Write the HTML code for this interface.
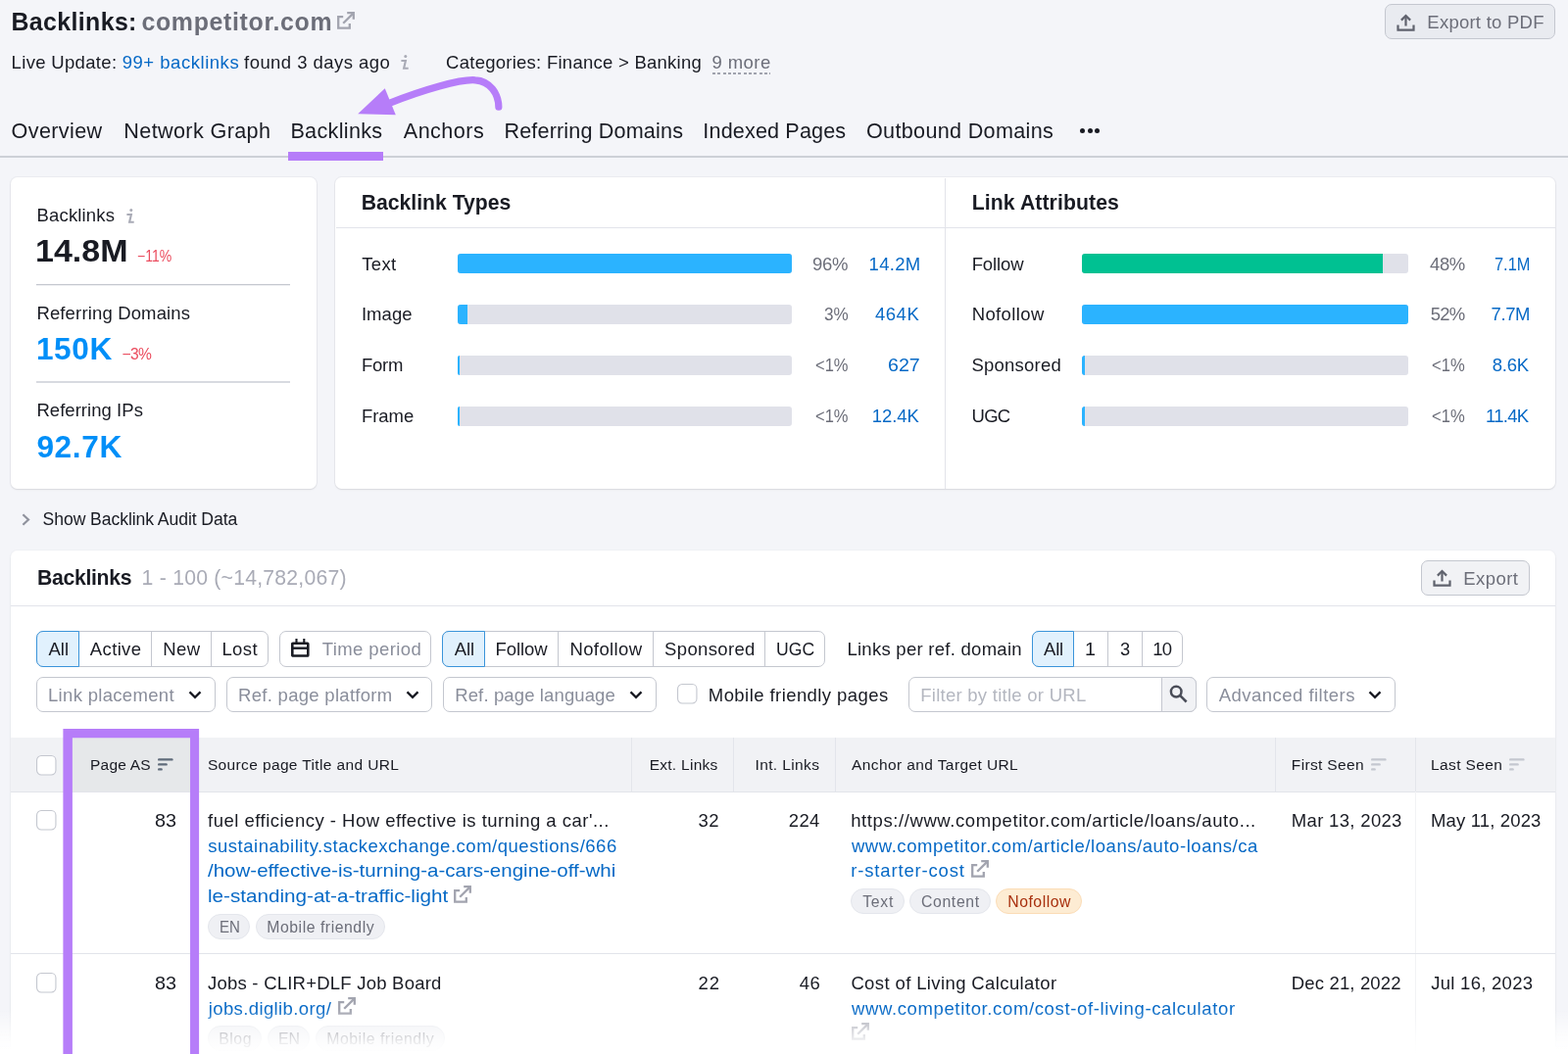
<!DOCTYPE html>
<html lang="en"><head><meta charset="utf-8"><title>Backlinks: competitor.com</title>
<style>
html,body{margin:0;padding:0}
body{width:1600px;height:1076px;overflow:hidden;position:relative;background:#f4f5f9;font-family:"Liberation Sans", sans-serif;}
#page{position:absolute;left:0;top:0;width:1600px;height:1076px;overflow:hidden;will-change:transform}
#page div,#page svg{position:absolute;box-sizing:border-box}
#page span{position:absolute;white-space:pre;display:block}
</style></head><body><div id="page">
<svg style="left:344.3px;top:12.1px;" width="18" height="18" viewBox="0 0 18 18"><g fill="none" stroke="#a2a4af" stroke-width="2.3" stroke-linecap="butt" stroke-linejoin="miter"><path d="M6.2 5.2 H1.2 V16.7 H12.8 V12"/><path d="M10.2 1.2 H16.8 V7.8"/><path d="M16.4 1.6 L6.2 11.8"/></g></svg>
<div style="left:1413.4px;top:4.2px;width:173.2px;height:36px;background:#e9ebf0;border:1px solid #c4c7cf;border-radius:7px;"></div>
<svg style="left:1425.2px;top:13.6px;" width="19" height="18" viewBox="0 0 18.4 18"><g fill="none" stroke="#5f626d" stroke-width="2.2" stroke-linejoin="miter"><path d="M1.2 11.5 V16.6 H17.2 V11.5"/><path d="M9.2 12.5 V2.5"/><path d="M4.6 6.6 L9.2 2 L13.8 6.6"/></g></svg>
<svg style="left:408px;top:55.1px;" width="10" height="17" viewBox="0 0 10 17"><path d="M1.4 7 H5.9 L4.1 14.8 H8.7" fill="none" stroke="#a9abb6" stroke-width="2.1"/><circle cx="5.8" cy="2.4" r="1.5" fill="#a9abb6"/></svg>
<div style="left:726.8px;top:74px;width:59px;height:1.8px;background:repeating-linear-gradient(to right,#a0a3ae 0,#a0a3ae 3px,transparent 3px,transparent 5.3px);"></div>
<div style="left:1102.2px;top:130.6px;width:5.2px;height:5.2px;background:#191b23;border-radius:50%;"></div>
<div style="left:1109.6000000000001px;top:130.6px;width:5.2px;height:5.2px;background:#191b23;border-radius:50%;"></div>
<div style="left:1117.0px;top:130.6px;width:5.2px;height:5.2px;background:#191b23;border-radius:50%;"></div>
<div style="left:0px;top:159px;width:1600px;height:2px;background:#cdd0d7;"></div>
<div style="left:294px;top:154.6px;width:97px;height:9.6px;background:#b67df9;"></div>
<svg style="left:350px;top:70px;" width="180" height="60" viewBox="0 0 180 60"><path d="M158.85 39.2 C158.8 26 150 12.5 135 11.8 C120 10.6 82 21.5 46 35.8" fill="none" stroke="#b67df9" stroke-width="7.2" stroke-linecap="round"/><path d="M15.2 46.35 L42.75 20.25 L53.8 47.25 Z" fill="#b67df9"/></svg>
<div style="left:10.8px;top:181.4px;width:311.8px;height:317.6px;background:#fff;border-radius:6.5px;box-shadow:0 0 0 1px rgba(25,27,35,0.045),0 1px 2px rgba(25,27,35,0.09);"></div>
<svg style="left:127.5px;top:212px;" width="10" height="17" viewBox="0 0 10 17"><path d="M1.4 7 H5.9 L4.1 14.8 H8.7" fill="none" stroke="#a9abb6" stroke-width="2.1"/><circle cx="5.8" cy="2.4" r="1.5" fill="#a9abb6"/></svg>
<svg style="left:37px;top:288px;" width="259" height="5" viewBox="0 0 259 5"><rect x="0" y="1.95" width="259" height="1.3" fill="#c4c7cf"/></svg>
<svg style="left:37px;top:388px;" width="259" height="5" viewBox="0 0 259 5"><rect x="0" y="1.35" width="259" height="1.3" fill="#c4c7cf"/></svg>
<div style="left:342.1px;top:181.4px;width:1245.1px;height:317.6px;background:#fff;border-radius:6.5px;box-shadow:0 0 0 1px rgba(25,27,35,0.045),0 1px 2px rgba(25,27,35,0.09);"></div>
<div style="left:342.5px;top:232.2px;width:1244.5px;height:1.2px;background:#e2e4ea;"></div>
<div style="left:963.8px;top:181.5px;width:1.2px;height:317.5px;background:#e2e4ea;"></div>
<div style="left:467px;top:259.4px;width:341px;height:20px;background:#e0e1e9;border-radius:3px;overflow:hidden;"></div>
<div style="left:467px;top:259.4px;width:341px;height:20px;background:#2bb3ff;border-radius:3px;"></div>
<div style="left:467px;top:311.29999999999995px;width:341px;height:20px;background:#e0e1e9;border-radius:3px;overflow:hidden;"></div>
<div style="left:467px;top:311.29999999999995px;width:10.2px;height:20px;background:#2bb3ff;border-radius:3px 0 0 3px;"></div>
<div style="left:467px;top:363.2px;width:341px;height:20px;background:#e0e1e9;border-radius:3px;overflow:hidden;"></div>
<div style="left:467px;top:363.2px;width:2.4px;height:20px;background:#2bb3ff;border-radius:3px 0 0 3px;"></div>
<div style="left:467px;top:415.09999999999997px;width:341px;height:20px;background:#e0e1e9;border-radius:3px;overflow:hidden;"></div>
<div style="left:467px;top:415.09999999999997px;width:2.4px;height:20px;background:#2bb3ff;border-radius:3px 0 0 3px;"></div>
<div style="left:1104.2px;top:259.4px;width:333px;height:20px;background:#e0e1e9;border-radius:3px;"></div>
<div style="left:1104.2px;top:259.4px;width:306.8px;height:20px;background:#00c192;border-radius:3px 0 0 3px;"></div>
<div style="left:1104.2px;top:311.29999999999995px;width:333px;height:20px;background:#e0e1e9;border-radius:3px;"></div>
<div style="left:1104.2px;top:311.29999999999995px;width:333px;height:20px;background:#2bb3ff;border-radius:3px;"></div>
<div style="left:1104.2px;top:363.2px;width:333px;height:20px;background:#e0e1e9;border-radius:3px;"></div>
<div style="left:1104.2px;top:363.2px;width:2.4px;height:20px;background:#2bb3ff;border-radius:3px 0 0 3px;"></div>
<div style="left:1104.2px;top:415.09999999999997px;width:333px;height:20px;background:#e0e1e9;border-radius:3px;"></div>
<div style="left:1104.2px;top:415.09999999999997px;width:2.4px;height:20px;background:#2bb3ff;border-radius:3px 0 0 3px;"></div>
<svg style="left:21.6px;top:524.2px;" width="9.5" height="13" viewBox="0 0 9.5 13"><path d="M1.4 1.3 L7 6.5 L1.4 11.7" fill="none" stroke="#8f929d" stroke-width="2.2"/></svg>
<div style="left:10.8px;top:561.8px;width:1576.4px;height:560px;background:#fff;border-radius:6.5px;box-shadow:0 0 0 1px rgba(25,27,35,0.02),0 1px 2px rgba(25,27,35,0.09);"></div>
<div style="left:1450px;top:572px;width:110.6px;height:35.6px;background:#f1f2f5;border:1px solid #c4c7cf;border-radius:7px;"></div>
<svg style="left:1462.4px;top:581px;" width="19" height="18" viewBox="0 0 18.4 18"><g fill="none" stroke="#5f626d" stroke-width="2.2" stroke-linejoin="miter"><path d="M1.2 11.5 V16.6 H17.2 V11.5"/><path d="M9.2 12.5 V2.5"/><path d="M4.6 6.6 L9.2 2 L13.8 6.6"/></g></svg>
<div style="left:11px;top:618px;width:1576px;height:1px;background:#e2e4ea;"></div>
<div style="left:37px;top:644px;width:237.2px;height:36.6px;background:#fff;border:1px solid #c4c7cf;border-radius:7px;"></div>
<div style="left:80.1px;top:644px;width:1px;height:36.6px;background:#c4c7cf;"></div>
<div style="left:153.9px;top:644px;width:1px;height:36.6px;background:#c4c7cf;"></div>
<div style="left:214.9px;top:644px;width:1px;height:36.6px;background:#c4c7cf;"></div>
<div style="left:37px;top:644px;width:44.099999999999994px;height:36.6px;background:#e1f1fd;border:1.3px solid #3a94da;border-radius:7px 0 0 7px;"></div>
<div style="left:285.2px;top:644px;width:155.2px;height:36.6px;background:#fff;border:1px solid #c4c7cf;border-radius:7px;"></div>
<svg style="left:297.4px;top:652.1px;" width="18.6" height="18.8" viewBox="0 0 18.6 18.8"><g fill="none" stroke="#191b23"><rect x="1.3" y="4.7" width="16" height="12.8" rx="0.6" stroke-width="2.6"/><path d="M1.3 9.7 H17.3" stroke-width="2.4"/><path d="M5.5 0 V5.6 M13.3 0 V5.6" stroke-width="2.1"/></g></svg>
<div style="left:451.2px;top:644px;width:391.2px;height:36.6px;background:#fff;border:1px solid #c4c7cf;border-radius:7px;"></div>
<div style="left:494.1px;top:644px;width:1px;height:36.6px;background:#c4c7cf;"></div>
<div style="left:569.3px;top:644px;width:1px;height:36.6px;background:#c4c7cf;"></div>
<div style="left:665.9px;top:644px;width:1px;height:36.6px;background:#c4c7cf;"></div>
<div style="left:779.9px;top:644px;width:1px;height:36.6px;background:#c4c7cf;"></div>
<div style="left:451.2px;top:644px;width:43.900000000000034px;height:36.6px;background:#e1f1fd;border:1.3px solid #3a94da;border-radius:7px 0 0 7px;"></div>
<div style="left:1052.6px;top:644px;width:154.4000000000001px;height:36.6px;background:#fff;border:1px solid #c4c7cf;border-radius:7px;"></div>
<div style="left:1095.3px;top:644px;width:1px;height:36.6px;background:#c4c7cf;"></div>
<div style="left:1129.9px;top:644px;width:1px;height:36.6px;background:#c4c7cf;"></div>
<div style="left:1164.7px;top:644px;width:1px;height:36.6px;background:#c4c7cf;"></div>
<div style="left:1052.6px;top:644px;width:43.700000000000045px;height:36.6px;background:#e1f1fd;border:1.3px solid #3a94da;border-radius:7px 0 0 7px;"></div>
<div style="left:37px;top:691px;width:183.2px;height:36px;background:#fff;border:1px solid #c4c7cf;border-radius:7px;"></div>
<svg style="left:192.2px;top:705.2px;" width="14" height="9" viewBox="0 0 13.4 9"><path d="M1.2 1.4 L6.7 6.9 L12.2 1.4" fill="none" stroke="#191b23" stroke-width="2.3"/></svg>
<div style="left:231.2px;top:691px;width:210.2px;height:36px;background:#fff;border:1px solid #c4c7cf;border-radius:7px;"></div>
<svg style="left:414.4px;top:705.2px;" width="14" height="9" viewBox="0 0 13.4 9"><path d="M1.2 1.4 L6.7 6.9 L12.2 1.4" fill="none" stroke="#191b23" stroke-width="2.3"/></svg>
<div style="left:452.2px;top:691px;width:217.59999999999997px;height:36px;background:#fff;border:1px solid #c4c7cf;border-radius:7px;"></div>
<svg style="left:641.6px;top:705.2px;" width="14" height="9" viewBox="0 0 13.4 9"><path d="M1.2 1.4 L6.7 6.9 L12.2 1.4" fill="none" stroke="#191b23" stroke-width="2.3"/></svg>
<svg style="left:691px;top:697.5px;" width="21" height="21" viewBox="0 0 21 21"><rect x="0.55" y="0.55" width="19.4" height="19.4" rx="4.6" fill="#fff" stroke="#c4c7cf" stroke-width="1.1"/></svg>
<div style="left:927.4px;top:691px;width:293.6px;height:36px;background:#fff;border:1px solid #c4c7cf;border-radius:7px;"></div>
<div style="left:1185px;top:691px;width:36px;height:36px;background:#f1f2f5;border:1px solid #c4c7cf;border-radius:0 7px 7px 0;"></div>
<svg style="left:1193px;top:699px;" width="19" height="19" viewBox="0 0 19 19"><g fill="none" stroke="#4a4d58"><circle cx="7.2" cy="7.1" r="5.3" stroke-width="2.5"/><path d="M11 10.9 L17.6 17.5" stroke-width="2.5"/></g></svg>
<div style="left:1231.2px;top:691px;width:193.2px;height:36px;background:#fff;border:1px solid #c4c7cf;border-radius:7px;"></div>
<svg style="left:1395.6px;top:705.2px;" width="14" height="9" viewBox="0 0 13.4 9"><path d="M1.2 1.4 L6.7 6.9 L12.2 1.4" fill="none" stroke="#191b23" stroke-width="2.3"/></svg>
<div style="left:11px;top:753px;width:1576px;height:55.4px;background:#f1f2f5;"></div>
<div style="left:74px;top:753px;width:120.4px;height:55.4px;background:#e6e8ea;"></div>
<div style="left:11px;top:807.6px;width:1576px;height:1.2px;background:#e2e4ea;"></div>
<div style="left:644.1px;top:753px;width:1px;height:55px;background:#e3e5eb;"></div>
<div style="left:747.7px;top:753px;width:1px;height:55px;background:#e3e5eb;"></div>
<div style="left:851.5px;top:753px;width:1px;height:55px;background:#e3e5eb;"></div>
<div style="left:1300.7px;top:753px;width:1px;height:55px;background:#e3e5eb;"></div>
<div style="left:1443.7px;top:753px;width:1px;height:55px;background:#e3e5eb;"></div>
<div style="left:1443.8px;top:808px;width:1px;height:280px;background:#f1f2f5;"></div>
<svg style="left:37.3px;top:771.2px;" width="21" height="21" viewBox="0 0 21 21"><rect x="0.55" y="0.55" width="19.4" height="19.4" rx="4.6" fill="#fff" stroke="#c4c7cf" stroke-width="1.1"/></svg>
<svg style="left:161.3px;top:773.6px;" width="16" height="13" viewBox="0 0 16 13"><g fill="#5f6b7a"><rect x="0" y="0.2" width="15.6" height="2.4" rx="1.2"/><rect x="0" y="5.2" width="9.8" height="2.4" rx="1.2"/><rect x="0" y="10.2" width="4.8" height="2.4" rx="1.2"/></g></svg>
<svg style="left:1398.8px;top:773.6px;" width="16" height="13" viewBox="0 0 16 13"><g fill="#c4c7cf"><rect x="0" y="0.2" width="15.6" height="2.4" rx="1.2"/><rect x="0" y="5.2" width="9.8" height="2.4" rx="1.2"/><rect x="0" y="10.2" width="4.8" height="2.4" rx="1.2"/></g></svg>
<svg style="left:1540.4px;top:773.6px;" width="16" height="13" viewBox="0 0 16 13"><g fill="#c4c7cf"><rect x="0" y="0.2" width="15.6" height="2.4" rx="1.2"/><rect x="0" y="5.2" width="9.8" height="2.4" rx="1.2"/><rect x="0" y="10.2" width="4.8" height="2.4" rx="1.2"/></g></svg>
<svg style="left:37.3px;top:826.9px;" width="21" height="21" viewBox="0 0 21 21"><rect x="0.55" y="0.55" width="19.4" height="19.4" rx="4.6" fill="#fff" stroke="#c4c7cf" stroke-width="1.1"/></svg>
<svg style="left:463.4px;top:904.2px;" width="18" height="18" viewBox="0 0 18 18"><g fill="none" stroke="#a2a4af" stroke-width="2.3" stroke-linecap="butt" stroke-linejoin="miter"><path d="M6.2 5.2 H1.2 V16.7 H12.8 V12"/><path d="M10.2 1.2 H16.8 V7.8"/><path d="M16.4 1.6 L6.2 11.8"/></g></svg>
<div style="left:212px;top:933.1px;width:42.599999999999994px;height:25.6px;background:#eff0f4;border-radius:13px;border:1px solid #e4e6ec;"></div>
<div style="left:260.8px;top:933.1px;width:132.59999999999997px;height:25.6px;background:#eff0f4;border-radius:13px;border:1px solid #e4e6ec;"></div>
<svg style="left:991px;top:878px;" width="18" height="18" viewBox="0 0 18 18"><g fill="none" stroke="#a2a4af" stroke-width="2.3" stroke-linecap="butt" stroke-linejoin="miter"><path d="M6.2 5.2 H1.2 V16.7 H12.8 V12"/><path d="M10.2 1.2 H16.8 V7.8"/><path d="M16.4 1.6 L6.2 11.8"/></g></svg>
<div style="left:868.2px;top:907.3px;width:54.39999999999998px;height:25.6px;background:#eff0f4;border-radius:13px;border:1px solid #e4e6ec;"></div>
<div style="left:928.2px;top:907.3px;width:82.59999999999991px;height:25.6px;background:#eff0f4;border-radius:13px;border:1px solid #e4e6ec;"></div>
<div style="left:1016.2px;top:907.3px;width:88.0px;height:25.6px;background:#fdecd3;border-radius:13px;border:1px solid #fbdcb6;"></div>
<div style="left:11px;top:972.6px;width:1576px;height:1.2px;background:#e2e4ea;"></div>
<svg style="left:37.3px;top:992.7px;" width="21" height="21" viewBox="0 0 21 21"><rect x="0.55" y="0.55" width="19.4" height="19.4" rx="4.6" fill="#fff" stroke="#c4c7cf" stroke-width="1.1"/></svg>
<svg style="left:345.2px;top:1018.2px;" width="18" height="18" viewBox="0 0 18 18"><g fill="none" stroke="#a2a4af" stroke-width="2.3" stroke-linecap="butt" stroke-linejoin="miter"><path d="M6.2 5.2 H1.2 V16.7 H12.8 V12"/><path d="M10.2 1.2 H16.8 V7.8"/><path d="M16.4 1.6 L6.2 11.8"/></g></svg>
<div style="left:212px;top:1047.4px;width:55px;height:25.6px;background:#eff0f4;border-radius:13px;border:1px solid #e4e6ec;"></div>
<div style="left:272.8px;top:1047.4px;width:43.0px;height:25.6px;background:#eff0f4;border-radius:13px;border:1px solid #e4e6ec;"></div>
<div style="left:321.6px;top:1047.4px;width:132.79999999999995px;height:25.6px;background:#eff0f4;border-radius:13px;border:1px solid #e4e6ec;"></div>
<svg style="left:869px;top:1044px;" width="18" height="18" viewBox="0 0 18 18"><g fill="none" stroke="#a2a4af" stroke-width="2.3" stroke-linecap="butt" stroke-linejoin="miter"><path d="M6.2 5.2 H1.2 V16.7 H12.8 V12"/><path d="M10.2 1.2 H16.8 V7.8"/><path d="M16.4 1.6 L6.2 11.8"/></g></svg>
<span style="left:11.52px;top:8px;font-size:24.9px;line-height:28px;color:#191b23;font-weight:700;letter-spacing:0.373px;">Backlinks:</span>
<span style="left:144.48px;top:8px;font-size:24.9px;line-height:28px;color:#6c6e79;font-weight:700;letter-spacing:0.671px;">competitor.com</span>
<span style="left:1456.32px;top:12px;font-size:18.5px;line-height:21px;color:#6c6e79;letter-spacing:0.245px;">Export to PDF</span>
<span style="left:11.62px;top:53px;font-size:18.5px;line-height:21px;color:#191b23;letter-spacing:0.327px;">Live Update:</span>
<span style="left:124.65px;top:53px;font-size:18.5px;line-height:21px;color:#0669c6;letter-spacing:0.534px;">99+ backlinks</span>
<span style="left:249.05px;top:53px;font-size:18.5px;line-height:21px;color:#191b23;letter-spacing:0.452px;">found 3 days ago</span>
<span style="left:455.08px;top:53px;font-size:18.5px;line-height:21px;color:#191b23;letter-spacing:0.258px;">Categories: Finance &gt; Banking</span>
<span style="left:726.45px;top:53px;font-size:18.5px;line-height:21px;color:#6c6e79;letter-spacing:0.438px;">9 more</span>
<span style="left:11.62px;top:121px;font-size:21.6px;line-height:25px;color:#191b23;letter-spacing:0.361px;">Overview</span>
<span style="left:126.29px;top:121px;font-size:21.6px;line-height:25px;color:#191b23;letter-spacing:0.375px;">Network Graph</span>
<span style="left:296.39px;top:121px;font-size:21.6px;line-height:25px;color:#191b23;letter-spacing:0.322px;">Backlinks</span>
<span style="left:411.82px;top:121px;font-size:21.6px;line-height:25px;color:#191b23;letter-spacing:0.441px;">Anchors</span>
<span style="left:514.39px;top:121px;font-size:21.6px;line-height:25px;color:#191b23;letter-spacing:0.161px;">Referring Domains</span>
<span style="left:717.37px;top:121px;font-size:21.6px;line-height:25px;color:#191b23;letter-spacing:0.145px;">Indexed Pages</span>
<span style="left:884.02px;top:121px;font-size:21.6px;line-height:25px;color:#191b23;letter-spacing:0.313px;">Outbound Domains</span>
<span style="left:37.58px;top:209px;font-size:18.5px;line-height:21px;color:#191b23;letter-spacing:0.156px;">Backlinks</span>
<span style="left:36.46px;top:238px;font-size:31.6px;line-height:36px;color:#191b23;font-weight:700;transform:scaleX(1.0776);transform-origin:0 0;">14.8M</span>
<span style="left:139.51px;top:253px;font-size:15.6px;line-height:17px;color:#eb4c5e;transform:scaleX(0.8984);transform-origin:0 0;">−11%</span>
<span style="left:37.38px;top:309px;font-size:18.5px;line-height:21px;color:#191b23;letter-spacing:0.153px;">Referring Domains</span>
<span style="left:36.91px;top:338px;font-size:31.6px;line-height:36px;color:#008ff8;font-weight:700;letter-spacing:0.617px;">150K</span>
<span style="left:124.43px;top:353px;font-size:15.6px;line-height:17px;color:#eb4c5e;letter-spacing:-0.565px;">−3%</span>
<span style="left:37.38px;top:408px;font-size:18.5px;line-height:21px;color:#191b23;letter-spacing:0.051px;">Referring IPs</span>
<span style="left:37.40px;top:438px;font-size:31.6px;line-height:36px;color:#008ff8;font-weight:700;letter-spacing:0.644px;">92.7K</span>
<span style="left:368.78px;top:195px;font-size:21.2px;line-height:23px;color:#191b23;font-weight:700;letter-spacing:-0.017px;">Backlink Types</span>
<span style="left:991.78px;top:195px;font-size:21.2px;line-height:23px;color:#191b23;font-weight:700;letter-spacing:0.098px;">Link Attributes</span>
<span style="left:369.18px;top:259px;font-size:18.5px;line-height:21px;color:#191b23;letter-spacing:0.338px;">Text</span>
<span style="left:829.05px;top:259px;font-size:18.5px;line-height:21px;color:#6c6e79;letter-spacing:-0.312px;">96%</span>
<span style="left:886.61px;top:259px;font-size:18.5px;line-height:21px;color:#0669c6;letter-spacing:0.271px;">14.2M</span>
<span style="left:368.89px;top:310px;font-size:18.5px;line-height:21px;color:#191b23;letter-spacing:0.077px;">Image</span>
<span style="left:840.67px;top:310px;font-size:18.5px;line-height:21px;color:#6c6e79;transform:scaleX(0.9249);transform-origin:0 0;">3%</span>
<span style="left:892.89px;top:310px;font-size:18.5px;line-height:21px;color:#0669c6;letter-spacing:0.565px;">464K</span>
<span style="left:368.88px;top:362px;font-size:18.5px;line-height:21px;color:#191b23;letter-spacing:-0.178px;">Form</span>
<span style="left:831.89px;top:362px;font-size:18.5px;line-height:21px;color:#6c6e79;transform:scaleX(0.8921);transform-origin:0 0;">&lt;1%</span>
<span style="left:905.82px;top:362px;font-size:18.5px;line-height:21px;color:#0669c6;transform:scaleX(1.0612);transform-origin:0 0;">627</span>
<span style="left:368.88px;top:414px;font-size:18.5px;line-height:21px;color:#191b23;letter-spacing:-0.028px;">Frame</span>
<span style="left:831.89px;top:414px;font-size:18.5px;line-height:21px;color:#6c6e79;transform:scaleX(0.8921);transform-origin:0 0;">&lt;1%</span>
<span style="left:889.71px;top:414px;font-size:18.5px;line-height:21px;color:#0669c6;letter-spacing:-0.065px;">12.4K</span>
<span style="left:991.68px;top:259px;font-size:18.5px;line-height:21px;color:#191b23;letter-spacing:-0.119px;">Follow</span>
<span style="left:1459.09px;top:259px;font-size:18.5px;line-height:21px;color:#6c6e79;letter-spacing:-0.433px;">48%</span>
<span style="left:1524.88px;top:259px;font-size:18.5px;line-height:21px;color:#0669c6;transform:scaleX(0.8864);transform-origin:0 0;">7.1M</span>
<span style="left:991.68px;top:310px;font-size:18.5px;line-height:21px;color:#191b23;letter-spacing:0.388px;">Nofollow</span>
<span style="left:1459.78px;top:310px;font-size:18.5px;line-height:21px;color:#6c6e79;letter-spacing:-0.775px;">52%</span>
<span style="left:1521.57px;top:310px;font-size:18.5px;line-height:21px;color:#0669c6;letter-spacing:-0.398px;">7.7M</span>
<span style="left:991.46px;top:362px;font-size:18.5px;line-height:21px;color:#191b23;letter-spacing:0.231px;">Sponsored</span>
<span style="left:1461.49px;top:362px;font-size:18.5px;line-height:21px;color:#6c6e79;transform:scaleX(0.8976);transform-origin:0 0;">&lt;1%</span>
<span style="left:1522.72px;top:362px;font-size:18.5px;line-height:21px;color:#0669c6;letter-spacing:-0.190px;">8.6K</span>
<span style="left:991.57px;top:414px;font-size:18.5px;line-height:21px;color:#191b23;letter-spacing:-0.797px;">UGC</span>
<span style="left:1461.49px;top:414px;font-size:18.5px;line-height:21px;color:#6c6e79;transform:scaleX(0.8976);transform-origin:0 0;">&lt;1%</span>
<span style="left:1516.11px;top:414px;font-size:18.5px;line-height:21px;color:#0669c6;letter-spacing:-0.722px;">11.4K</span>
<span style="left:43.59px;top:520px;font-size:17.6px;line-height:20px;color:#191b23;letter-spacing:-0.077px;">Show Backlink Audit Data</span>
<span style="left:38.11px;top:578px;font-size:21.2px;line-height:23px;color:#191b23;font-weight:700;letter-spacing:-0.323px;">Backlinks</span>
<span style="left:144.61px;top:578px;font-size:21.2px;line-height:23px;color:#a9abb6;letter-spacing:0.227px;">1 - 100 (~14,782,067)</span>
<span style="left:1493.22px;top:580px;font-size:18.5px;line-height:21px;color:#6c6e79;letter-spacing:0.450px;">Export</span>
<span style="left:49.47px;top:652px;font-size:18.5px;line-height:21px;color:#191b23;">All</span>
<span style="left:91.87px;top:652px;font-size:18.5px;line-height:21px;color:#191b23;letter-spacing:0.352px;">Active</span>
<span style="left:166.22px;top:652px;font-size:18.5px;line-height:21px;color:#191b23;letter-spacing:0.460px;">New</span>
<span style="left:226.42px;top:652px;font-size:18.5px;line-height:21px;color:#191b23;letter-spacing:0.383px;">Lost</span>
<span style="left:328.69px;top:652px;font-size:18.5px;line-height:21px;color:#8a8e9b;letter-spacing:0.410px;">Time period</span>
<span style="left:463.67px;top:652px;font-size:18.5px;line-height:21px;color:#191b23;letter-spacing:-0.099px;">All</span>
<span style="left:505.62px;top:652px;font-size:18.5px;line-height:21px;color:#191b23;letter-spacing:-0.106px;">Follow</span>
<span style="left:581.42px;top:652px;font-size:18.5px;line-height:21px;color:#191b23;letter-spacing:0.398px;">Nofollow</span>
<span style="left:678.08px;top:652px;font-size:18.5px;line-height:21px;color:#191b23;letter-spacing:0.354px;">Sponsored</span>
<span style="left:792.18px;top:652px;font-size:18.5px;line-height:21px;color:#191b23;transform:scaleX(0.9505);transform-origin:0 0;">UGC</span>
<span style="left:864.42px;top:652px;font-size:18.5px;line-height:21px;color:#191b23;letter-spacing:0.271px;">Links per ref. domain</span>
<span style="left:1065.07px;top:652px;font-size:18.5px;line-height:21px;color:#191b23;letter-spacing:-0.199px;">All</span>
<span style="left:1107.42px;top:652px;font-size:18.5px;line-height:21px;color:#191b23;transform:scaleX(1.0621);transform-origin:0 0;">1</span>
<span style="left:1143.22px;top:652px;font-size:18.5px;line-height:21px;color:#191b23;transform:scaleX(0.9888);transform-origin:0 0;">3</span>
<span style="left:1176.31px;top:652px;font-size:18.5px;line-height:21px;color:#191b23;letter-spacing:-0.766px;">10</span>
<span style="left:49.02px;top:699px;font-size:18.5px;line-height:21px;color:#8a8e9b;letter-spacing:0.314px;">Link placement</span>
<span style="left:243.02px;top:699px;font-size:18.5px;line-height:21px;color:#8a8e9b;letter-spacing:0.294px;">Ref. page platform</span>
<span style="left:464.22px;top:699px;font-size:18.5px;line-height:21px;color:#8a8e9b;letter-spacing:0.124px;">Ref. page language</span>
<span style="left:722.82px;top:699px;font-size:18.5px;line-height:21px;color:#191b23;letter-spacing:0.431px;">Mobile friendly pages</span>
<span style="left:939.22px;top:699px;font-size:18.5px;line-height:21px;color:#b4b7c0;letter-spacing:0.263px;">Filter by title or URL</span>
<span style="left:1243.67px;top:699px;font-size:18.5px;line-height:21px;color:#8a8e9b;letter-spacing:0.478px;">Advanced filters</span>
<span style="left:92.05px;top:772px;font-size:15.5px;line-height:17px;color:#191b23;letter-spacing:0.189px;">Page AS</span>
<span style="left:211.90px;top:772px;font-size:15.5px;line-height:17px;color:#191b23;letter-spacing:0.370px;">Source page Title and URL</span>
<span style="left:662.65px;top:772px;font-size:15.5px;line-height:17px;color:#191b23;letter-spacing:0.279px;">Ext. Links</span>
<span style="left:770.49px;top:772px;font-size:15.5px;line-height:17px;color:#191b23;letter-spacing:0.382px;">Int. Links</span>
<span style="left:869.03px;top:772px;font-size:15.5px;line-height:17px;color:#191b23;letter-spacing:0.399px;">Anchor and Target URL</span>
<span style="left:1317.85px;top:772px;font-size:15.5px;line-height:17px;color:#191b23;letter-spacing:0.346px;">First Seen</span>
<span style="left:1460.05px;top:772px;font-size:15.5px;line-height:17px;color:#191b23;letter-spacing:0.393px;">Last Seen</span>
<span style="left:158.46px;top:827px;font-size:18.5px;line-height:21px;color:#191b23;transform:scaleX(1.0696);transform-origin:0 0;">83</span>
<span style="left:212.05px;top:827px;font-size:18.5px;line-height:21px;color:#191b23;letter-spacing:0.489px;">fuel efficiency - How effective is turning a car&#x27;...</span>
<span style="left:212.20px;top:853px;font-size:18.5px;line-height:21px;color:#0669c6;letter-spacing:0.522px;">sustainability.stackexchange.com/questions/666</span>
<span style="left:212.31px;top:878px;font-size:18.5px;line-height:21px;color:#0669c6;transform:scaleX(1.1082);transform-origin:0 0;">/how-effective-is-turning-a-cars-engine-off-whi</span>
<span style="left:211.53px;top:904px;font-size:18.5px;line-height:21px;color:#0669c6;transform:scaleX(1.1161);transform-origin:0 0;">le-standing-at-a-traffic-light</span>
<span style="left:223.91px;top:938px;font-size:15.8px;line-height:17px;color:#6c6e79;transform:scaleX(0.9530);transform-origin:0 0;">EN</span>
<span style="left:272.25px;top:938px;font-size:15.8px;line-height:17px;color:#6c6e79;letter-spacing:0.538px;">Mobile friendly</span>
<span style="left:712.41px;top:827px;font-size:18.5px;line-height:21px;color:#191b23;letter-spacing:0.537px;">32</span>
<span style="left:804.79px;top:827px;font-size:18.5px;line-height:21px;color:#191b23;letter-spacing:0.339px;">224</span>
<span style="left:868.24px;top:827px;font-size:18.5px;line-height:21px;color:#191b23;letter-spacing:0.584px;">https://www.competitor.com/article/loans/auto...</span>
<span style="left:868.94px;top:853px;font-size:18.5px;line-height:21px;color:#0669c6;letter-spacing:0.550px;">www.competitor.com/article/loans/auto-loans/ca</span>
<span style="left:868.30px;top:878px;font-size:18.5px;line-height:21px;color:#0669c6;letter-spacing:0.830px;">r-starter-cost</span>
<span style="left:880.31px;top:912px;font-size:15.8px;line-height:17px;color:#6c6e79;letter-spacing:0.674px;">Text</span>
<span style="left:940.01px;top:912px;font-size:15.8px;line-height:17px;color:#6c6e79;letter-spacing:0.629px;">Content</span>
<span style="left:1028.25px;top:912px;font-size:15.8px;line-height:17px;color:#a8300e;letter-spacing:0.503px;">Nofollow</span>
<span style="left:1317.82px;top:827px;font-size:18.5px;line-height:21px;color:#191b23;letter-spacing:0.325px;">Mar 13, 2023</span>
<span style="left:1460.02px;top:827px;font-size:18.5px;line-height:21px;color:#191b23;letter-spacing:0.151px;">May 11, 2023</span>
<span style="left:158.46px;top:993px;font-size:18.5px;line-height:21px;color:#191b23;transform:scaleX(1.0696);transform-origin:0 0;">83</span>
<span style="left:212.02px;top:993px;font-size:18.5px;line-height:21px;color:#191b23;letter-spacing:0.228px;">Jobs - CLIR+DLF Job Board</span>
<span style="left:212.76px;top:1019px;font-size:18.5px;line-height:21px;color:#0669c6;letter-spacing:0.383px;">jobs.diglib.org/</span>
<span style="left:223.25px;top:1052px;font-size:15.8px;line-height:17px;color:#6c6e79;letter-spacing:0.516px;">Blog</span>
<span style="left:284.05px;top:1052px;font-size:15.8px;line-height:17px;color:#6c6e79;letter-spacing:-0.110px;">EN</span>
<span style="left:333.25px;top:1052px;font-size:15.8px;line-height:17px;color:#6c6e79;letter-spacing:0.538px;">Mobile friendly</span>
<span style="left:712.59px;top:993px;font-size:18.5px;line-height:21px;color:#191b23;letter-spacing:0.763px;">22</span>
<span style="left:815.69px;top:993px;font-size:18.5px;line-height:21px;color:#191b23;letter-spacing:0.540px;">46</span>
<span style="left:868.38px;top:993px;font-size:18.5px;line-height:21px;color:#191b23;letter-spacing:0.384px;">Cost of Living Calculator</span>
<span style="left:868.94px;top:1019px;font-size:18.5px;line-height:21px;color:#0669c6;letter-spacing:0.633px;">www.competitor.com/cost-of-living-calculator</span>
<span style="left:1317.82px;top:993px;font-size:18.5px;line-height:21px;color:#191b23;letter-spacing:0.150px;">Dec 21, 2022</span>
<span style="left:1460.22px;top:993px;font-size:18.5px;line-height:21px;color:#191b23;letter-spacing:0.271px;">Jul 16, 2023</span>
<div style="left:0;top:1030px;width:1600px;height:46px;background:linear-gradient(to bottom, rgba(255,255,255,0) 0%, rgba(255,255,255,0.3) 25%, rgba(255,255,255,0.62) 50%, rgba(255,255,255,0.86) 75%, rgba(255,255,255,1) 100%);"></div>
<svg style="left:60px;top:740px;" width="150" height="340" viewBox="0 0 150 340"><path d="M4.4 3.9 H143.1 V340 H134.05 V13.2 H13.9 V340 H4.4 Z" fill="#b67df9"/></svg>
</div></body></html>
